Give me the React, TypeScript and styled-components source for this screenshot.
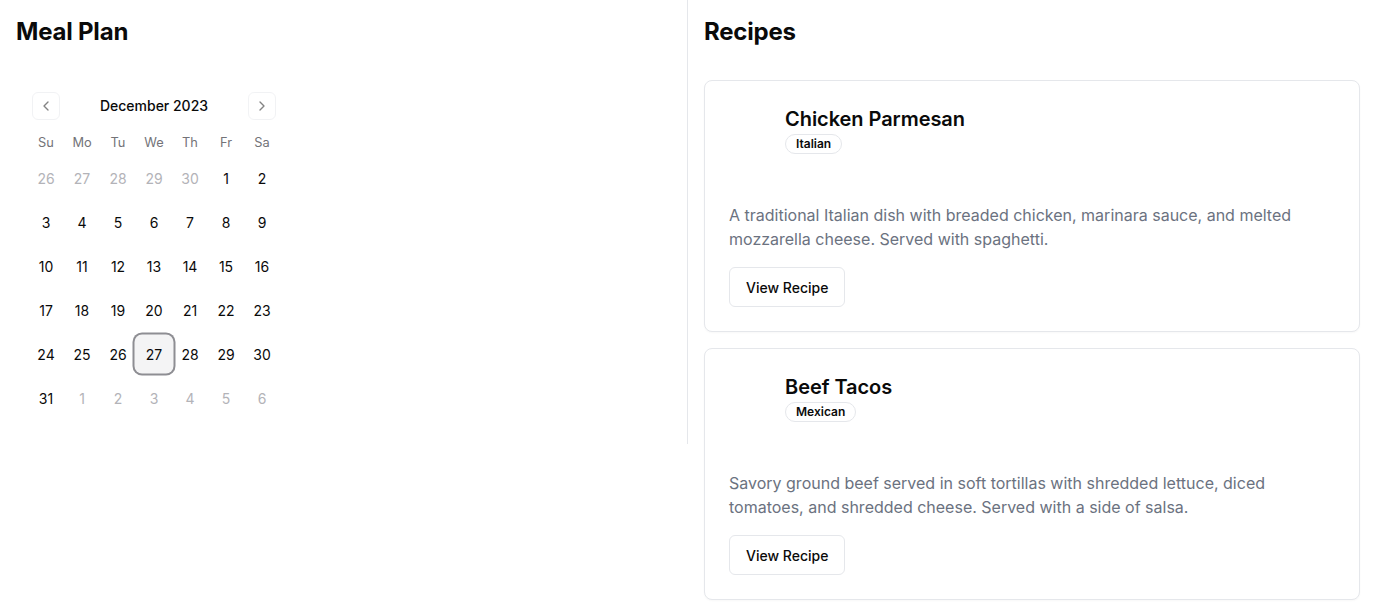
import React from "react";
import styled, { createGlobalStyle } from "styled-components";
import { ChevronLeft, ChevronRight } from "lucide-react";

const GlobalStyle = createGlobalStyle`
  html, body { margin: 0; padding: 0; background: #ffffff; }
  body {
    font-family: Inter, "Noto Sans", "Liberation Sans", sans-serif;
    color: #0a0a0a;
    -webkit-font-smoothing: antialiased;
  }
  * { box-sizing: border-box; }
`;

const Page = styled.div`
  display: grid;
  grid-template-columns: 1fr 1fr;
  align-items: start;
  width: 1376px;
`;

const LeftColumn = styled.section`
  padding: 16px;
  border-right: 1px solid #e5e7eb;
`;

const RightColumn = styled.section`
  padding: 16px;
`;

const Heading = styled.h2`
  margin: 0 0 32px 0;
  font-size: 24px;
  line-height: 32px;
  font-weight: 700;
  letter-spacing: -0.2px;
`;

const Calendar = styled.div`
  padding: 12px;
  width: fit-content;
`;

const Caption = styled.div`
  position: relative;
  display: flex;
  justify-content: center;
  align-items: center;
  padding-top: 4px;
  height: 24px;
  margin-bottom: 16px;
`;

const CaptionLabel = styled.div`
  font-size: 14px;
  line-height: 20px;
  font-weight: 500;
`;

const NavButton = styled.button<{ $side: "left" | "right" }>`
  position: absolute;
  top: 0;
  ${(p) => (p.$side === "left" ? "left: 4px;" : "right: 4px;")}
  width: 28px;
  height: 28px;
  display: flex;
  align-items: center;
  justify-content: center;
  padding: 0;
  border: 1px solid #e5e7eb;
  border-radius: 6px;
  background: transparent;
  color: #0a0a0a;
  opacity: 0.5;
  cursor: pointer;
`;

const WeekRow = styled.div<{ $head?: boolean }>`
  display: flex;
  margin-top: ${(p) => (p.$head ? "0" : "8px")};
`;

const HeadCell = styled.div`
  width: 36px;
  height: 20px;
  padding-top: 1px;
  text-align: center;
  font-size: 12.8px;
  line-height: 20px;
  color: #737378;
`;

const DayCell = styled.button<{ $outside?: boolean; $today?: boolean }>`
  width: 36px;
  height: 36px;
  padding: 0;
  border: none;
  border-radius: 6px;
  font-family: inherit;
  font-size: 14px;
  font-weight: 400;
  color: ${(p) => (p.$outside ? "#b3b3b8" : "#0a0a0a")};
  background: ${(p) => (p.$today ? "#f4f4f5" : "transparent")};
  box-shadow: ${(p) =>
    p.$today ? "0 0 0 1.5px #f4f4f5, 0 0 0 3.5px #8e8e93" : "none"};
  cursor: pointer;
`;

const CardList = styled.div`
  display: flex;
  flex-direction: column;
  gap: 16px;
`;

const Card = styled.article`
  border: 1px solid #e5e7eb;
  border-radius: 8px;
  background: #ffffff;
  box-shadow: 0 1px 2px rgba(0, 0, 0, 0.03);
`;

const CardHeader = styled.div`
  display: flex;
  gap: 8px;
  padding: 24px;
  min-height: 122px;
`;

const Thumb = styled.div`
  width: 48px;
  height: 48px;
  flex-shrink: 0;
`;

const HeaderText = styled.div`
  display: flex;
  flex-direction: column;
  align-items: flex-start;
`;

const RecipeTitle = styled.h3`
  margin: 0;
  font-size: 20px;
  line-height: 28px;
  font-weight: 600;
  letter-spacing: -0.05px;
`;

const Badge = styled.span`
  display: inline-flex;
  align-items: center;
  height: 20px;
  padding: 0 10px;
  border: 1px solid #e5e7eb;
  border-radius: 999px;
  font-size: 12px;
  font-weight: 600;
  line-height: 16px;
  margin-top: 1px;
`;

const CardContent = styled.div`
  padding: 0 24px 24px 24px;
`;

const Description = styled.p`
  margin: 0 0 16px 0;
  font-size: 16px;
  line-height: 24px;
  color: #6b7280;
`;

const OutlineButton = styled.button`
  height: 40px;
  padding: 0 16px;
  border: 1px solid #e5e7eb;
  border-radius: 6px;
  background: #ffffff;
  font-family: inherit;
  font-size: 14px;
  font-weight: 500;
  color: #0a0a0a;
  cursor: pointer;
`;

type Day = { n: number; outside?: boolean; today?: boolean };

const buildWeeks = (): Day[][] => {
  const days: Day[] = [];
  [26, 27, 28, 29, 30].forEach((n) => days.push({ n, outside: true }));
  for (let i = 1; i <= 31; i++) days.push({ n: i, today: i === 27 });
  [1, 2, 3, 4, 5, 6].forEach((n) => days.push({ n, outside: true }));
  const weeks: Day[][] = [];
  for (let i = 0; i < days.length; i += 7) weeks.push(days.slice(i, i + 7));
  return weeks;
};

const recipes = [
  {
    title: "Chicken Parmesan",
    cuisine: "Italian",
    description:
      "A traditional Italian dish with breaded chicken, marinara sauce, and melted mozzarella cheese. Served with spaghetti.",
  },
  {
    title: "Beef Tacos",
    cuisine: "Mexican",
    description:
      "Savory ground beef served in soft tortillas with shredded lettuce, diced tomatoes, and shredded cheese. Served with a side of salsa.",
  },
];

export default function App() {
  const weeks = buildWeeks();
  const heads = ["Su", "Mo", "Tu", "We", "Th", "Fr", "Sa"];
  return (
    <>
      <GlobalStyle />
      <Page>
        <LeftColumn>
          <Heading>Meal Plan</Heading>
          <Calendar>
            <Caption>
              <NavButton $side="left" aria-label="Previous month">
                <ChevronLeft size={16} strokeWidth={2} />
              </NavButton>
              <CaptionLabel>December 2023</CaptionLabel>
              <NavButton $side="right" aria-label="Next month">
                <ChevronRight size={16} strokeWidth={2} />
              </NavButton>
            </Caption>
            <WeekRow $head>
              {heads.map((h) => (
                <HeadCell key={h}>{h}</HeadCell>
              ))}
            </WeekRow>
            {weeks.map((w, i) => (
              <WeekRow key={i}>
                {w.map((d, j) => (
                  <DayCell key={j} $outside={d.outside} $today={d.today}>
                    {d.n}
                  </DayCell>
                ))}
              </WeekRow>
            ))}
          </Calendar>
        </LeftColumn>
        <RightColumn>
          <Heading>Recipes</Heading>
          <CardList>
            {recipes.map((r) => (
              <Card key={r.title}>
                <CardHeader>
                  <Thumb />
                  <HeaderText>
                    <RecipeTitle>{r.title}</RecipeTitle>
                    <Badge>{r.cuisine}</Badge>
                  </HeaderText>
                </CardHeader>
                <CardContent>
                  <Description>{r.description}</Description>
                  <OutlineButton>View Recipe</OutlineButton>
                </CardContent>
              </Card>
            ))}
          </CardList>
        </RightColumn>
      </Page>
    </>
  );
}
